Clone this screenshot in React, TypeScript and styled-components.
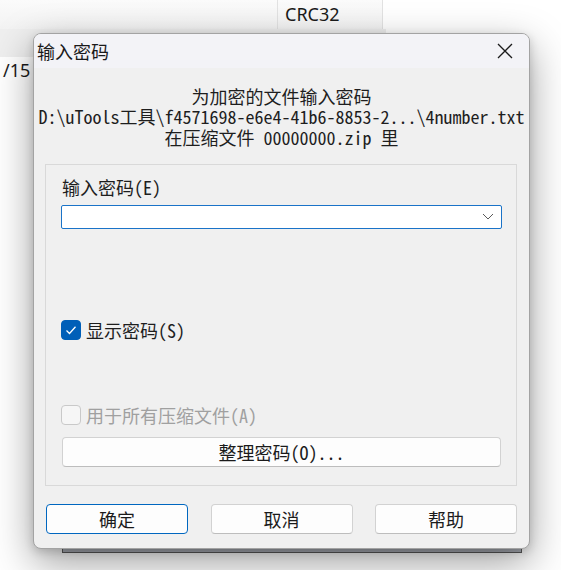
import React from "react";
import styled, { createGlobalStyle } from "styled-components";

const Global = createGlobalStyle`
  html, body { margin: 0; padding: 0; }
  body {
    width: 561px;
    height: 570px;
    overflow: hidden;
    background: #ffffff;
    font-family: "Noto Sans", "Noto Sans CJK SC", sans-serif;
  }
`;

const MONO = `"Noto Sans Mono CJK SC", "Noto Sans CJK SC", monospace`;
const UI = `"Noto Sans CJK SC", "Noto Sans", sans-serif`;

const Desktop = styled.div`
  position: relative;
  width: 561px;
  height: 570px;
  overflow: hidden;
  background: #ffffff;
`;

const ListHeader = styled.div`
  display: flex;
  width: 383px;
  height: 29px;
  background: linear-gradient(#fbfbfb, #f3f3f3);
`;

const HeaderCell = styled.div<{ $w: number }>`
  width: ${(p) => p.$w}px;
  box-sizing: border-box;
  border-right: 1px solid #e2e2e2;
  padding-left: 7px;
  font-family: "Noto Sans", sans-serif;
  font-size: 18px;
  line-height: 29px;
  color: #1a1a1a;
`;

const ListRow = styled.div<{ $shade?: boolean }>`
  width: 383px;
  height: 28px;
  background: ${(p) => (p.$shade ? "#efefef" : "#ffffff")};
  font-family: "Noto Sans", sans-serif;
  font-size: 18px;
  line-height: 27px;
  color: #1a1a1a;
  padding-left: 3px;
`;

const BackWindow = styled.div`
  position: absolute;
  left: 62px;
  top: 300px;
  width: 460px;
  height: 253px;
  box-sizing: border-box;
  background: #aeb2ba;
  border: 1px solid #5c5c5c;
`;

const Dialog = styled.div`
  position: absolute;
  left: 33px;
  top: 33px;
  width: 497px;
  height: 516px;
  box-sizing: border-box;
  display: flex;
  flex-direction: column;
  background: #f0f0f0;
  border: 1px solid #a3a3a3;
  border-radius: 8px;
  overflow: hidden;
  box-shadow: 0 14px 40px rgba(0, 0, 0, 0.38), 0 3px 10px rgba(0, 0, 0, 0.16);
`;

const TitleBar = styled.div`
  height: 34px;
  flex: none;
  display: flex;
  align-items: center;
  justify-content: space-between;
  background: #f3f3f7;
  padding-left: 3px;
  padding-right: 16px;
`;

const Title = styled.div`
  font-family: ${UI};
  font-size: 18px;
  color: #1a1a1a;
  line-height: 20px;
  margin-top: -1px;
`;

const CloseBtn = styled.div`
  width: 16px;
  height: 16px;
  display: flex;
`;

const Body = styled.div`
  display: flex;
  flex-direction: column;
  padding-top: 17.5px;
`;

const Info = styled.div`
  font-family: ${MONO};
  font-size: 18px;
  line-height: 20.5px;
  color: #1e1e1e;
  text-align: center;
  white-space: pre;
`;

const Group = styled.div`
  margin: 16.5px 12px 0 11px;
  height: 322px;
  box-sizing: border-box;
  border: 1px solid #d9d9d9;
  padding: 12px 14px 0 15px;
  display: flex;
  flex-direction: column;
`;

const Label = styled.div`
  font-family: ${MONO};
  font-size: 18px;
  line-height: 20px;
  color: #1e1e1e;
  padding-left: 1px;
`;

const Combo = styled.div`
  margin-top: 8px;
  height: 24px;
  box-sizing: border-box;
  background: #ffffff;
  border: 1px solid #1a73c8;
  border-radius: 2px;
  display: flex;
  align-items: center;
  justify-content: flex-end;
  padding-right: 7px;
`;

const CheckRow = styled.div<{ $top: number }>`
  margin-top: ${(p) => p.$top}px;
  display: flex;
  align-items: center;
  gap: 5px;
  height: 20px;
`;

const Box = styled.div<{ $checked?: boolean }>`
  width: 20px;
  height: 20px;
  box-sizing: border-box;
  border-radius: 4px;
  display: flex;
  align-items: center;
  justify-content: center;
  background: ${(p) => (p.$checked ? "#005fb8" : "#f6f6f6")};
  border: 1px solid ${(p) => (p.$checked ? "#005fb8" : "#c9c9c9")};
`;

const CheckText = styled.span<{ $disabled?: boolean }>`
  font-family: ${MONO};
  font-size: 18px;
  line-height: 20px;
  color: ${(p) => (p.$disabled ? "#a0a0a0" : "#1e1e1e")};
`;

const Button = styled.div<{ $primary?: boolean }>`
  height: 30px;
  box-sizing: border-box;
  display: flex;
  align-items: center;
  justify-content: center;
  background: #fdfdfd;
  border: 1px solid ${(p) => (p.$primary ? "#0067c0" : "#d2d2d2")};
  border-bottom-color: ${(p) => (p.$primary ? "#0067c0" : "#bdbdbd")};
  border-radius: 4px;
  font-family: ${MONO};
  font-size: 18px;
  color: #1b1b1b;
`;

const WideButton = styled(Button)`
  margin-top: 12px;
  margin-left: 1px;
  margin-right: 1px;
`;

const ButtonRow = styled.div`
  margin: 18px 12px 0 12px;
  display: grid;
  grid-template-columns: repeat(3, 1fr);
  column-gap: 22.5px;
`;

export default function App() {
  return (
    <Desktop>
      <Global />
      <ListHeader>
        <HeaderCell $w={278} />
        <HeaderCell $w={105}>CRC32</HeaderCell>
      </ListHeader>
      <ListRow $shade />
      <ListRow>/15</ListRow>
      <BackWindow />
      <Dialog>
        <TitleBar>
          <Title>输入密码</Title>
          <CloseBtn>
            <svg width="16" height="16" viewBox="0 0 16 16">
              <path d="M1 1 L15 15 M15 1 L1 15" stroke="#1b1b1b" strokeWidth="1.3" fill="none" />
            </svg>
          </CloseBtn>
        </TitleBar>
        <Body>
          <Info>
            {"为加密的文件输入密码\nD:\\uTools工具\\f4571698-e6e4-41b6-8853-2...\\4number.txt\n在压缩文件 00000000.zip 里"}
          </Info>
          <Group>
            <Label>输入密码(E)</Label>
            <Combo>
              <svg width="12" height="7" viewBox="0 0 12 7">
                <path d="M1 1 L6 6 L11 1" stroke="#5a5a5a" strokeWidth="1" fill="none" />
              </svg>
            </Combo>
            <CheckRow $top={91}>
              <Box $checked>
                <svg width="14" height="14" viewBox="0 0 14 14">
                  <path d="M2.5 7.5 L5.5 10.5 L11.5 3.8" stroke="#ffffff" strokeWidth="1.3" fill="none" />
                </svg>
              </Box>
              <CheckText>显示密码(S)</CheckText>
            </CheckRow>
            <CheckRow $top={65}>
              <Box />
              <CheckText $disabled>用于所有压缩文件(A)</CheckText>
            </CheckRow>
            <WideButton>整理密码(O)...</WideButton>
          </Group>
          <ButtonRow>
            <Button $primary>确定</Button>
            <Button>取消</Button>
            <Button>帮助</Button>
          </ButtonRow>
        </Body>
      </Dialog>
    </Desktop>
  );
}
